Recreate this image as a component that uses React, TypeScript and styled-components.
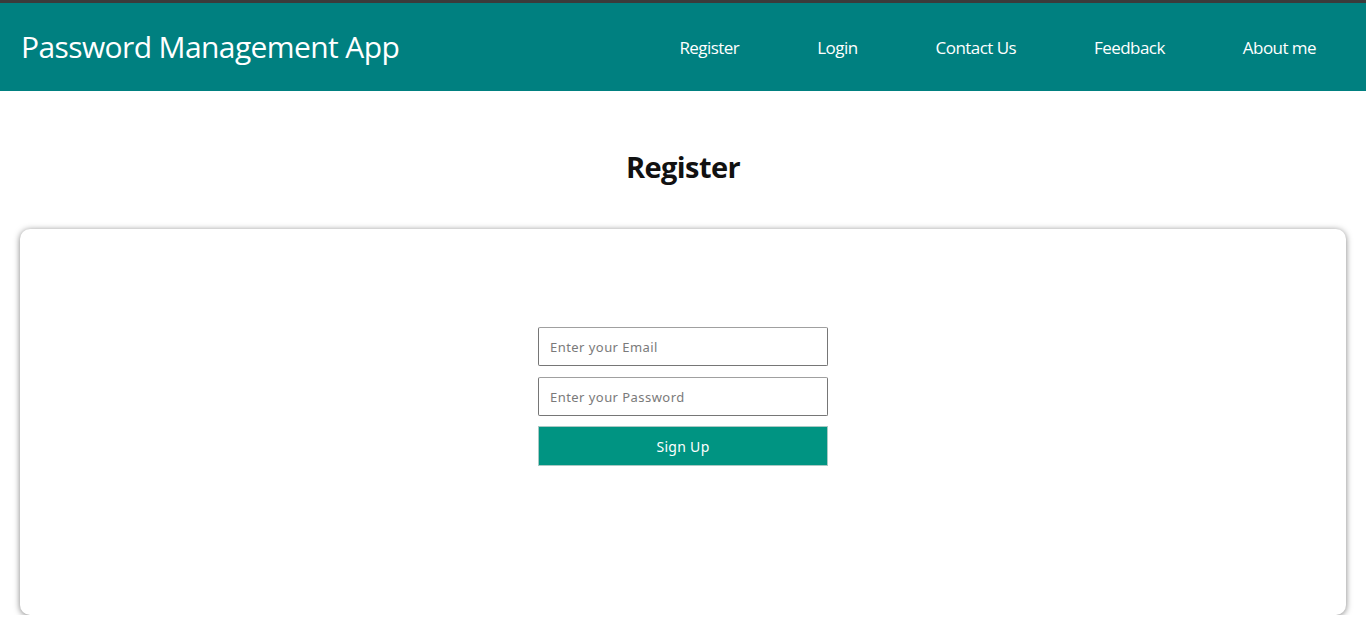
import React from 'react';
import styled, { createGlobalStyle } from 'styled-components';

const GlobalStyle = createGlobalStyle`
	body {
		margin: 0;
		background: #fff;
		font-family: 'Open Sans', 'Liberation Sans', sans-serif;
	}
`;

const Header = styled.header`
	height: 88px;
	border-top: 3px solid #3b3b3b;
	background-color: #008080;
	display: flex;
	align-items: center;
	justify-content: space-between;
	padding: 0 21px;
	color: #fff;
`;

const Brand = styled.div`
	font-family: 'Open Sans', sans-serif;
	font-size: 30px;
	letter-spacing: -0.6px;
	padding-bottom: 2px;
`;

const Nav = styled.nav`
	display: flex;
	align-items: center;
`;

const NavLink = styled.a`
	font-family: 'Open Sans', sans-serif;
	font-size: 17px;
	letter-spacing: -0.55px;
	color: #fff;
	text-decoration: none;
	padding: 0 39px;
	&:last-child {
		padding-right: 29px;
	}
`;

const Title = styled.h1`
	margin: 58px 0 44px;
	text-align: center;
	font-family: 'Open Sans', sans-serif;
	font-size: 29px;
	font-weight: 700;
	letter-spacing: -0.6px;
	color: #111;
	line-height: 36px;
`;

const Card = styled.section`
	margin: 0 20px;
	height: 386px;
	background: #fff;
	border-radius: 10px;
	box-shadow: 0 1px 6px rgba(0, 0, 0, 0.5);
	display: flex;
	flex-direction: column;
	align-items: center;
	padding-top: 98px;
	box-sizing: border-box;
`;

const Form = styled.form`
	display: flex;
	flex-direction: column;
	gap: 11px;
	width: 290px;
`;

const Input = styled.input`
	height: 39px;
	box-sizing: border-box;
	border: 1px solid #767676;
	border-top-color: #a0a0a0;
	border-radius: 2px;
	padding: 0 11px;
	font-family: 'Noto Sans', 'Open Sans', sans-serif;
	font-size: 13px;
	color: #333;
	outline: none;
	&::placeholder {
		color: #7a7a7a;
		letter-spacing: 0.45px;
	}
`;

const SubmitButton = styled.button`
	height: 40px;
	margin-top: -1px;
	background-color: #009482;
	border: 1px solid #a9c9c4;
	color: #fff;
	font-family: 'Noto Sans', 'Open Sans', sans-serif;
	font-size: 14px;
	letter-spacing: 0.3px;
	cursor: pointer;
`;

export default function App() {
	return (
		<>
			<GlobalStyle />
			<Header>
				<Brand>Password Management App</Brand>
				<Nav>
					<NavLink href="#">Register</NavLink>
					<NavLink href="#">Login</NavLink>
					<NavLink href="#">Contact Us</NavLink>
					<NavLink href="#">Feedback</NavLink>
					<NavLink href="#">About me</NavLink>
				</Nav>
			</Header>
			<Title>Register</Title>
			<Card>
				<Form onSubmit={(e) => e.preventDefault()}>
					<Input type="email" placeholder="Enter your Email" />
					<Input type="password" placeholder="Enter your Password" />
					<SubmitButton type="submit">Sign Up</SubmitButton>
				</Form>
			</Card>
		</>
	);
}
